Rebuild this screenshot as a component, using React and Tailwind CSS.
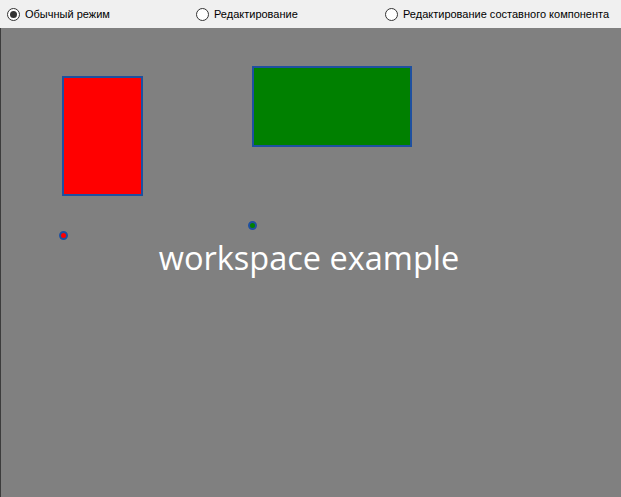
import React, { useState } from "react";

const modes = [
  "Обычный режим",
  "Редактирование",
  "Редактирование составного компонента",
];

function Radio({ label, checked, onSelect }) {
  return (
    <label
      onClick={onSelect}
      className="flex items-center gap-[5px] w-[189px] cursor-default"
    >
      <span className="w-[13px] h-[13px] rounded-full border border-[#333333] bg-white flex items-center justify-center shrink-0">
        {checked && <span className="w-[7px] h-[7px] rounded-full bg-[#333333]" />}
      </span>
      <span className="whitespace-nowrap">{label}</span>
    </label>
  );
}

function Dot({ x, y, color }) {
  return (
    <div
      className={`absolute w-[9px] h-[9px] rounded-full border-2 border-[#1e50a0] ${color}`}
      style={{ left: x - 4, top: y - 4 }}
    />
  );
}

export default function App() {
  const [mode, setMode] = useState(0);

  return (
    <div className="w-[621px] h-[497px] flex flex-col bg-[#808080] overflow-hidden">
      <div className="h-[28px] bg-[#f0f0f0] flex items-center pl-[7px] text-[11px] text-black font-['Liberation_Sans',Arial,sans-serif]">
        {modes.map((m, i) => (
          <Radio key={m} label={m} checked={mode === i} onSelect={() => setMode(i)} />
        ))}
      </div>

      <div className="relative flex-1 border-l border-[#3c3c3c]">
        {/* canvas items, coordinates relative to workspace (top = 28) */}
        <div className="absolute left-[61px] top-[48px] w-[81px] h-[120px] bg-[#ff0000] border-2 border-[#1e50a0]" />
        <div className="absolute left-[251px] top-[38px] w-[160px] h-[81px] bg-[#008000] border-2 border-[#1e50a0]" />

        <Dot x={62} y={207} color="bg-[#ff0000]" />
        <Dot x={251} y={197} color="bg-[#008000]" />

        <div className="absolute left-0 right-0 top-[214px] pr-[4px] text-center text-white text-[32.5px] leading-none font-['Open_Sans',sans-serif]">
          workspace example
        </div>
      </div>
    </div>
  );
}
